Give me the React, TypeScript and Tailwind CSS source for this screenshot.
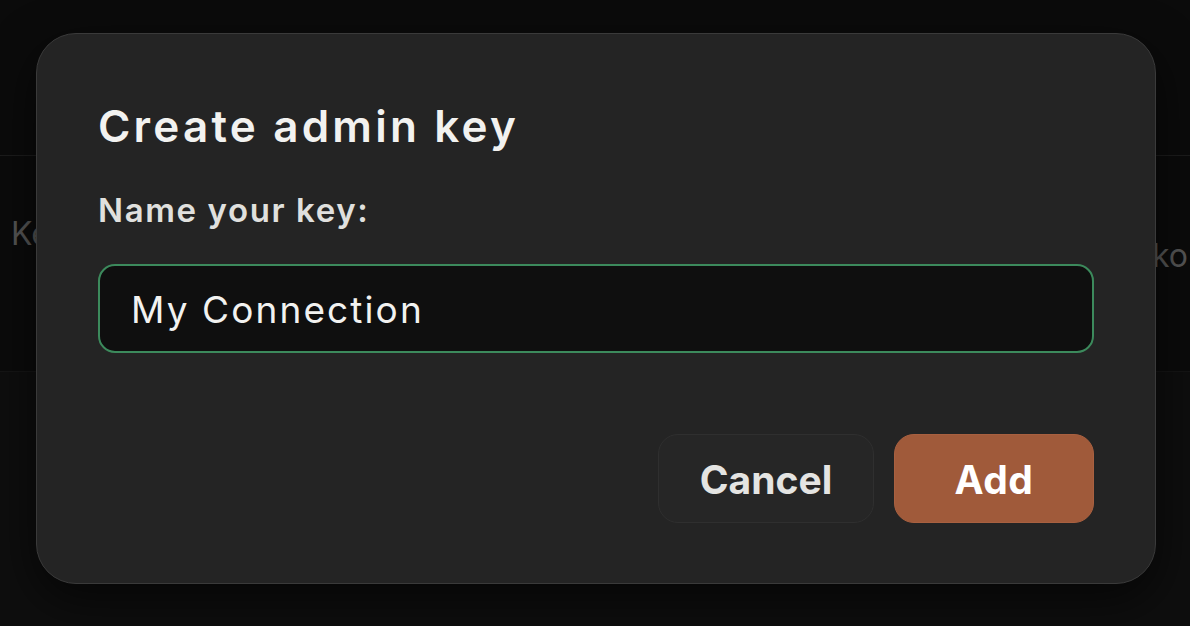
import React from "react";

export default function App() {
  return (
    <div
      className="relative w-[1190px] h-[626px] overflow-hidden bg-[#0e0e0e]"
      style={{ fontFamily: "Inter, 'Noto Sans', sans-serif" }}
    >
      {/* background page */}
      <div className="h-[156px] bg-[#0b0b0b] border-b border-[#1c1c1c]" />
      <div className="h-[216px] bg-[#0b0b0b] border-b border-[#151515] flex justify-between items-start pt-[62px] text-[32px] text-[#555555] overflow-hidden">
        <span className="pl-[11px] leading-none">Keys</span>
        <span className="leading-none pr-[2px] mt-[22px]">Teko</span>
      </div>

      {/* dialog */}
      <div className="absolute left-[36px] top-[33px] w-[1120px] h-[551px] rounded-[40px] bg-[#242424] border border-[#3a3a3a] shadow-[0_16px_48px_rgba(0,0,0,0.6)] px-[61px] pt-[96px] flex flex-col">
        <h1 className="absolute left-[61px] top-[66px] text-[44px] font-semibold leading-[1.2] text-[#f2f2f0] tracking-[3.2px]">
          Create admin key
        </h1>
        <div className="mt-[61px] text-[33px] font-semibold leading-[1.2] text-[#e0e0de] tracking-[1.6px]">
          Name your key:
        </div>
        <div className="mt-[33px] h-[89px] rounded-[17px] border-2 border-[#3c8a5c] bg-[#0f0f0f] flex items-center px-[31px]">
          <span className="text-[37px] leading-none text-[#f2f2f0] tracking-[2.1px] pt-[3px]">My Connection</span>
        </div>
        <div className="mt-[81px] flex justify-end gap-[20px]">
          <button className="w-[216px] h-[89px] rounded-[20px] bg-[#262626] border border-[#2f2f2f] text-[39px] font-bold text-[#e4e4e2] tracking-[0px] pt-[4px]">
            Cancel
          </button>
          <button className="w-[200px] h-[89px] rounded-[20px] bg-[#a05a3a] border border-[#a86040] text-[39px] font-bold text-white tracking-[0.5px] pt-[4px]">
            Add
          </button>
        </div>
      </div>
    </div>
  );
}
